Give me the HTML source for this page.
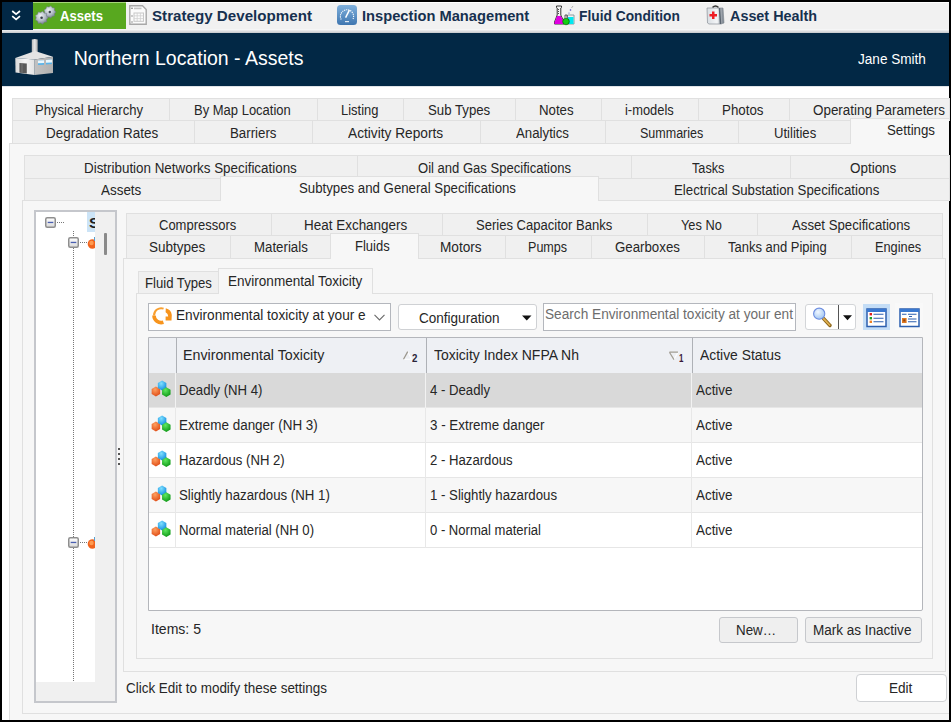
<!DOCTYPE html>
<html><head><meta charset="utf-8"><style>
html,body{margin:0;padding:0;}
body{width:951px;height:722px;position:relative;overflow:hidden;background:#000;font-family:"Liberation Sans",sans-serif;}
body>div{position:absolute;box-sizing:border-box;}
.t{white-space:pre;}
svg{position:absolute;overflow:visible;}
</style></head><body>
<div style="left:2px;top:2px;width:947px;height:718px;background:#ffffff;"></div>
<div style="left:2px;top:2px;width:947px;height:27px;background:#f1f1f1;border-top:1px solid #fff;"></div>
<div style="left:2px;top:2px;width:31px;height:27px;background:#022845;"></div>
<div style="left:33px;top:2px;width:93px;height:27px;background:#58a81f;border-top:1px solid #a6d67a;"></div>
<div style="left:2px;top:29px;width:947px;height:4px;background:linear-gradient(#fcfcfc,#c4c8cc);"></div>
<div style="left:2px;top:29px;width:31px;height:1px;background:#022845;"></div>
<div style="left:2px;top:33px;width:947px;height:53px;background:#022845;"></div>
<div style="left:2px;top:86px;width:947px;height:1px;background:#dfe3e7;"></div>
<div class="t" style="left:60px;top:8px;font-size:15.5px;line-height:15.5px;font-weight:700;color:#ffffff;transform:scaleX(0.8457);transform-origin:0 0;">Assets</div>
<div class="t" style="left:152px;top:8px;font-size:15.5px;line-height:15.5px;font-weight:700;color:#16304f;transform:scaleX(0.9776);transform-origin:0 0;">Strategy Development</div>
<div class="t" style="left:361.6px;top:8px;font-size:15.5px;line-height:15.5px;font-weight:700;color:#16304f;transform:scaleX(0.947);transform-origin:0 0;">Inspection Management</div>
<div class="t" style="left:579px;top:8px;font-size:15.5px;line-height:15.5px;font-weight:700;color:#16304f;transform:scaleX(0.8879);transform-origin:0 0;">Fluid Condition</div>
<div class="t" style="left:729.6px;top:8px;font-size:15.5px;line-height:15.5px;font-weight:700;color:#16304f;transform:scaleX(0.9275);transform-origin:0 0;">Asset Health</div>
<div class="t" style="left:73.7px;top:49px;font-size:19.5px;line-height:19.5px;font-weight:400;color:#ffffff;">Northern Location - Assets</div>
<div class="t" style="left:858.4px;top:52px;font-size:14px;line-height:14px;font-weight:400;color:#ffffff;transform:scaleX(0.9694);transform-origin:0 0;">Jane Smith</div>
<div style="left:9px;top:143px;width:940px;height:577px;background:#f7f7f7;border-left:1px solid #e0e0e0;border-top:1px solid #e0e0e0;"></div>
<div style="left:12px;top:98px;width:158px;height:23px;background:#f0f0f0;border:1px solid #e0e0e0;"></div>
<div style="left:169px;top:98px;width:149px;height:23px;background:#f0f0f0;border:1px solid #e0e0e0;"></div>
<div style="left:317px;top:98px;width:87px;height:23px;background:#f0f0f0;border:1px solid #e0e0e0;"></div>
<div style="left:403px;top:98px;width:113px;height:23px;background:#f0f0f0;border:1px solid #e0e0e0;"></div>
<div style="left:515px;top:98px;width:87px;height:23px;background:#f0f0f0;border:1px solid #e0e0e0;"></div>
<div style="left:601px;top:98px;width:98px;height:23px;background:#f0f0f0;border:1px solid #e0e0e0;"></div>
<div style="left:698px;top:98px;width:92px;height:23px;background:#f0f0f0;border:1px solid #e0e0e0;"></div>
<div style="left:789px;top:98px;width:161px;height:23px;background:#f0f0f0;border:1px solid #e0e0e0;"></div>
<div class="t" style="left:35px;top:104px;font-size:13.8px;line-height:13.8px;font-weight:400;color:#262626;transform:scaleX(0.9453);transform-origin:0 0;">Physical Hierarchy</div>
<div class="t" style="left:193.8px;top:104px;font-size:13.8px;line-height:13.8px;font-weight:400;color:#262626;transform:scaleX(0.9418);transform-origin:0 0;">By Map Location</div>
<div class="t" style="left:341px;top:104px;font-size:13.8px;line-height:13.8px;font-weight:400;color:#262626;transform:scaleX(0.9376);transform-origin:0 0;">Listing</div>
<div class="t" style="left:427.6px;top:104px;font-size:13.8px;line-height:13.8px;font-weight:400;color:#262626;transform:scaleX(0.9576);transform-origin:0 0;">Sub Types</div>
<div class="t" style="left:539px;top:104px;font-size:13.8px;line-height:13.8px;font-weight:400;color:#262626;transform:scaleX(0.9599);transform-origin:0 0;">Notes</div>
<div class="t" style="left:625.3px;top:104px;font-size:13.8px;line-height:13.8px;font-weight:400;color:#262626;transform:scaleX(0.934);transform-origin:0 0;">i-models</div>
<div class="t" style="left:722.4px;top:104px;font-size:13.8px;line-height:13.8px;font-weight:400;color:#262626;transform:scaleX(0.9658);transform-origin:0 0;">Photos</div>
<div class="t" style="left:813px;top:104px;font-size:13.8px;line-height:13.8px;font-weight:400;color:#262626;transform:scaleX(0.9725);transform-origin:0 0;">Operating Parameters</div>
<div style="left:12px;top:120px;width:183px;height:24px;background:#f0f0f0;border:1px solid #e0e0e0;"></div>
<div style="left:194px;top:120px;width:119px;height:24px;background:#f0f0f0;border:1px solid #e0e0e0;"></div>
<div style="left:312px;top:120px;width:169px;height:24px;background:#f0f0f0;border:1px solid #e0e0e0;"></div>
<div style="left:480px;top:120px;width:126px;height:24px;background:#f0f0f0;border:1px solid #e0e0e0;"></div>
<div style="left:605px;top:120px;width:134px;height:24px;background:#f0f0f0;border:1px solid #e0e0e0;"></div>
<div style="left:738px;top:120px;width:113px;height:24px;background:#f0f0f0;border:1px solid #e0e0e0;"></div>
<div class="t" style="left:46.4px;top:127px;font-size:13.8px;line-height:13.8px;font-weight:400;color:#262626;transform:scaleX(0.9744);transform-origin:0 0;">Degradation Rates</div>
<div class="t" style="left:229.7px;top:127px;font-size:13.8px;line-height:13.8px;font-weight:400;color:#262626;transform:scaleX(0.9628);transform-origin:0 0;">Barriers</div>
<div class="t" style="left:348px;top:127px;font-size:13.8px;line-height:13.8px;font-weight:400;color:#262626;transform:scaleX(0.9933);transform-origin:0 0;">Activity Reports</div>
<div class="t" style="left:515.5px;top:127px;font-size:13.8px;line-height:13.8px;font-weight:400;color:#262626;transform:scaleX(0.9598);transform-origin:0 0;">Analytics</div>
<div class="t" style="left:640.4px;top:127px;font-size:13.8px;line-height:13.8px;font-weight:400;color:#262626;transform:scaleX(0.9071);transform-origin:0 0;">Summaries</div>
<div class="t" style="left:773.9px;top:127px;font-size:13.8px;line-height:13.8px;font-weight:400;color:#262626;transform:scaleX(0.949);transform-origin:0 0;">Utilities</div>
<div style="left:850px;top:118px;width:99px;height:26px;background:#f7f7f7;border:1px solid #e0e0e0;border-bottom:none;border-right:none;"></div>
<div class="t" style="left:886.9px;top:124px;font-size:13.8px;line-height:13.8px;font-weight:400;color:#262626;transform:scaleX(0.9627);transform-origin:0 0;">Settings</div>
<div style="left:22px;top:200px;width:927px;height:514px;background:#f7f7f7;border:1px solid #e0e0e0;border-right:none;"></div>
<div style="left:24px;top:155px;width:334px;height:24px;background:#f0f0f0;border:1px solid #e0e0e0;"></div>
<div style="left:357px;top:155px;width:275px;height:24px;background:#f0f0f0;border:1px solid #e0e0e0;"></div>
<div style="left:631px;top:155px;width:160px;height:24px;background:#f0f0f0;border:1px solid #e0e0e0;"></div>
<div style="left:790px;top:155px;width:160px;height:24px;background:#f0f0f0;border:1px solid #e0e0e0;"></div>
<div class="t" style="left:83.5px;top:162px;font-size:13.8px;line-height:13.8px;font-weight:400;color:#262626;transform:scaleX(0.9703);transform-origin:0 0;">Distribution Networks Specifications</div>
<div class="t" style="left:417.5px;top:162px;font-size:13.8px;line-height:13.8px;font-weight:400;color:#262626;transform:scaleX(0.9455);transform-origin:0 0;">Oil and Gas Specifications</div>
<div class="t" style="left:692px;top:162px;font-size:13.8px;line-height:13.8px;font-weight:400;color:#262626;transform:scaleX(0.9183);transform-origin:0 0;">Tasks</div>
<div class="t" style="left:850.4px;top:162px;font-size:13.8px;line-height:13.8px;font-weight:400;color:#262626;transform:scaleX(0.9735);transform-origin:0 0;">Options</div>
<div style="left:24px;top:178px;width:197px;height:23px;background:#f0f0f0;border:1px solid #e0e0e0;"></div>
<div class="t" style="left:101px;top:184px;font-size:13.8px;line-height:13.8px;font-weight:400;color:#262626;transform:scaleX(0.9733);transform-origin:0 0;">Assets</div>
<div style="left:598px;top:178px;width:352px;height:23px;background:#f0f0f0;border:1px solid #e0e0e0;"></div>
<div class="t" style="left:674px;top:184px;font-size:13.8px;line-height:13.8px;font-weight:400;color:#262626;transform:scaleX(0.9595);transform-origin:0 0;">Electrical Substation Specifications</div>
<div style="left:220px;top:176px;width:379px;height:25px;background:#f7f7f7;border:1px solid #e0e0e0;border-bottom:none;"></div>
<div class="t" style="left:299px;top:182px;font-size:13.8px;line-height:13.8px;font-weight:400;color:#262626;transform:scaleX(0.959);transform-origin:0 0;">Subtypes and General Specifications</div>
<div style="left:34px;top:210px;width:83px;height:493px;background:#f0f0f0;border:2px solid #c5c7cc;"></div>
<div style="left:36px;top:212px;width:59px;height:470px;background:#ffffff;"></div>
<div style="left:104px;top:233px;width:3px;height:22px;background:#8a8a8a;border-radius:1px;"></div>
<div style="left:118px;top:448px;width:2px;height:2px;background:#555;"></div>
<div style="left:118px;top:453px;width:2px;height:2px;background:#555;"></div>
<div style="left:118px;top:458px;width:2px;height:2px;background:#555;"></div>
<div style="left:118px;top:463px;width:2px;height:2px;background:#555;"></div>
<div style="left:123px;top:258px;width:823px;height:414px;background:#f7f7f7;border:1px solid #e0e0e0;"></div>
<div style="left:126px;top:213px;width:146px;height:23px;background:#f0f0f0;border:1px solid #e0e0e0;"></div>
<div style="left:271px;top:213px;width:172px;height:23px;background:#f0f0f0;border:1px solid #e0e0e0;"></div>
<div style="left:442px;top:213px;width:206px;height:23px;background:#f0f0f0;border:1px solid #e0e0e0;"></div>
<div style="left:647px;top:213px;width:111px;height:23px;background:#f0f0f0;border:1px solid #e0e0e0;"></div>
<div style="left:757px;top:213px;width:186px;height:23px;background:#f0f0f0;border:1px solid #e0e0e0;"></div>
<div class="t" style="left:158.7px;top:219px;font-size:13.8px;line-height:13.8px;font-weight:400;color:#262626;transform:scaleX(0.9421);transform-origin:0 0;">Compressors</div>
<div class="t" style="left:304.4px;top:219px;font-size:13.8px;line-height:13.8px;font-weight:400;color:#262626;transform:scaleX(0.976);transform-origin:0 0;">Heat Exchangers</div>
<div class="t" style="left:476.2px;top:219px;font-size:13.8px;line-height:13.8px;font-weight:400;color:#262626;transform:scaleX(0.9454);transform-origin:0 0;">Series Capacitor Banks</div>
<div class="t" style="left:681.4px;top:219px;font-size:13.8px;line-height:13.8px;font-weight:400;color:#262626;transform:scaleX(0.9276);transform-origin:0 0;">Yes No</div>
<div class="t" style="left:792px;top:219px;font-size:13.8px;line-height:13.8px;font-weight:400;color:#262626;transform:scaleX(0.9565);transform-origin:0 0;">Asset Specifications</div>
<div style="left:126px;top:235px;width:105px;height:24px;background:#f0f0f0;border:1px solid #e0e0e0;"></div>
<div style="left:230px;top:235px;width:101px;height:24px;background:#f0f0f0;border:1px solid #e0e0e0;"></div>
<div class="t" style="left:148.6px;top:241px;font-size:13.8px;line-height:13.8px;font-weight:400;color:#262626;transform:scaleX(0.9769);transform-origin:0 0;">Subtypes</div>
<div class="t" style="left:253.6px;top:241px;font-size:13.8px;line-height:13.8px;font-weight:400;color:#262626;transform:scaleX(0.961);transform-origin:0 0;">Materials</div>
<div style="left:418px;top:235px;width:88px;height:24px;background:#f0f0f0;border:1px solid #e0e0e0;"></div>
<div style="left:505px;top:235px;width:87px;height:24px;background:#f0f0f0;border:1px solid #e0e0e0;"></div>
<div style="left:591px;top:235px;width:114px;height:24px;background:#f0f0f0;border:1px solid #e0e0e0;"></div>
<div style="left:704px;top:235px;width:148px;height:24px;background:#f0f0f0;border:1px solid #e0e0e0;"></div>
<div style="left:851px;top:235px;width:92px;height:24px;background:#f0f0f0;border:1px solid #e0e0e0;"></div>
<div class="t" style="left:439.5px;top:241px;font-size:13.8px;line-height:13.8px;font-weight:400;color:#262626;transform:scaleX(0.9888);transform-origin:0 0;">Motors</div>
<div class="t" style="left:528.3px;top:241px;font-size:13.8px;line-height:13.8px;font-weight:400;color:#262626;transform:scaleX(0.9103);transform-origin:0 0;">Pumps</div>
<div class="t" style="left:615.2px;top:241px;font-size:13.8px;line-height:13.8px;font-weight:400;color:#262626;transform:scaleX(0.9615);transform-origin:0 0;">Gearboxes</div>
<div class="t" style="left:728.4px;top:241px;font-size:13.8px;line-height:13.8px;font-weight:400;color:#262626;transform:scaleX(0.9401);transform-origin:0 0;">Tanks and Piping</div>
<div class="t" style="left:875.2px;top:241px;font-size:13.8px;line-height:13.8px;font-weight:400;color:#262626;transform:scaleX(0.9246);transform-origin:0 0;">Engines</div>
<div style="left:330px;top:233px;width:89px;height:26px;background:#f7f7f7;border:1px solid #e0e0e0;border-bottom:none;"></div>
<div class="t" style="left:354.5px;top:240px;font-size:13.8px;line-height:13.8px;font-weight:400;color:#262626;transform:scaleX(0.9426);transform-origin:0 0;">Fluids</div>
<div style="left:136px;top:293px;width:797px;height:366px;background:#f7f7f7;border:1px solid #e0e0e0;"></div>
<div style="left:138px;top:271px;width:81px;height:23px;background:#f0f0f0;border:1px solid #e0e0e0;"></div>
<div class="t" style="left:145.2px;top:277px;font-size:13.8px;line-height:13.8px;font-weight:400;color:#262626;transform:scaleX(0.9515);transform-origin:0 0;">Fluid Types</div>
<div style="left:218px;top:268px;width:155px;height:26px;background:#f7f7f7;border:1px solid #e0e0e0;border-bottom:none;"></div>
<div class="t" style="left:227.9px;top:275px;font-size:13.8px;line-height:13.8px;font-weight:400;color:#262626;transform:scaleX(0.9809);transform-origin:0 0;">Environmental Toxicity</div>
<div style="left:148px;top:303px;width:243px;height:28px;background:#ffffff;border:1px solid #b4b7bd;"></div>
<div class="t" style="left:176.3px;top:309px;font-size:13.8px;line-height:13.8px;font-weight:400;color:#262626;transform:scaleX(0.9895);transform-origin:0 0;">Environmental toxicity at your e</div>
<div style="left:398px;top:304px;width:139px;height:26px;background:#ffffff;border:1px solid #cfd1d4;border-radius:3px;"></div>
<div class="t" style="left:419px;top:312px;font-size:13.8px;line-height:13.8px;font-weight:400;color:#262626;transform:scaleX(0.9808);transform-origin:0 0;">Configuration</div>
<div style="left:543px;top:303px;width:253px;height:28px;background:#ffffff;border:1px solid #b4b7bd;"></div>
<div class="t" style="left:545.2px;top:308px;font-size:13.8px;line-height:13.8px;font-weight:400;color:#6d6d6d;transform:scaleX(0.989);transform-origin:0 0;">Search Environmental toxicity at your ent</div>
<div style="left:805px;top:304px;width:51px;height:26px;background:#ffffff;border:1px solid #d3d5d8;border-radius:3px;"></div>
<div style="left:838px;top:305px;width:1px;height:24px;background:#555;"></div>
<div style="left:863px;top:304px;width:27px;height:26px;background:#c4ddf6;"></div>
<div style="left:895px;top:303px;width:28px;height:27px;background:#f9f9f9;"></div>
<div style="left:148px;top:337px;width:775px;height:274px;background:#ffffff;border:1px solid #b4b6bb;border-radius:0 0 2px 0;"></div>
<div style="left:149px;top:338px;width:773px;height:35px;background:#eef0f4;"></div>
<div style="left:176px;top:338px;width:1px;height:35px;background:#aeb1b6;"></div>
<div style="left:426px;top:338px;width:1px;height:35px;background:#aeb1b6;"></div>
<div style="left:692px;top:338px;width:1px;height:35px;background:#aeb1b6;"></div>
<div style="left:149px;top:373px;width:773px;height:35px;background:#d9d9d9;border-bottom:1px solid #e6e6e6;"></div>
<div style="left:175px;top:373px;width:1px;height:35px;background:#f2f2f2;"></div>
<div style="left:425px;top:373px;width:1px;height:35px;background:#f2f2f2;"></div>
<div style="left:691px;top:373px;width:1px;height:35px;background:#f2f2f2;"></div>
<div class="t" style="left:178.5px;top:384px;font-size:13.8px;line-height:13.8px;font-weight:400;color:#262626;transform:scaleX(0.9553);transform-origin:0 0;">Deadly (NH 4)</div>
<div class="t" style="left:430px;top:384px;font-size:13.8px;line-height:13.8px;font-weight:400;color:#262626;transform:scaleX(0.954);transform-origin:0 0;">4 - Deadly</div>
<div class="t" style="left:695.7px;top:384px;font-size:13.8px;line-height:13.8px;font-weight:400;color:#262626;transform:scaleX(0.9713);transform-origin:0 0;">Active</div>
<div style="left:149px;top:408px;width:773px;height:35px;background:#f7f7f7;border-bottom:1px solid #e6e6e6;"></div>
<div style="left:175px;top:408px;width:1px;height:35px;background:#e8e8e8;"></div>
<div style="left:425px;top:408px;width:1px;height:35px;background:#e8e8e8;"></div>
<div style="left:691px;top:408px;width:1px;height:35px;background:#e8e8e8;"></div>
<div class="t" style="left:178.5px;top:419px;font-size:13.8px;line-height:13.8px;font-weight:400;color:#262626;transform:scaleX(0.9732);transform-origin:0 0;">Extreme danger (NH 3)</div>
<div class="t" style="left:430px;top:419px;font-size:13.8px;line-height:13.8px;font-weight:400;color:#262626;transform:scaleX(0.9694);transform-origin:0 0;">3 - Extreme danger</div>
<div class="t" style="left:695.7px;top:419px;font-size:13.8px;line-height:13.8px;font-weight:400;color:#262626;transform:scaleX(0.9713);transform-origin:0 0;">Active</div>
<div style="left:149px;top:443px;width:773px;height:35px;background:#ffffff;border-bottom:1px solid #e6e6e6;"></div>
<div style="left:175px;top:443px;width:1px;height:35px;background:#e8e8e8;"></div>
<div style="left:425px;top:443px;width:1px;height:35px;background:#e8e8e8;"></div>
<div style="left:691px;top:443px;width:1px;height:35px;background:#e8e8e8;"></div>
<div class="t" style="left:178.5px;top:454px;font-size:13.8px;line-height:13.8px;font-weight:400;color:#262626;transform:scaleX(0.9506);transform-origin:0 0;">Hazardous (NH 2)</div>
<div class="t" style="left:430px;top:454px;font-size:13.8px;line-height:13.8px;font-weight:400;color:#262626;transform:scaleX(0.9532);transform-origin:0 0;">2 - Hazardous</div>
<div class="t" style="left:695.7px;top:454px;font-size:13.8px;line-height:13.8px;font-weight:400;color:#262626;transform:scaleX(0.9713);transform-origin:0 0;">Active</div>
<div style="left:149px;top:478px;width:773px;height:35px;background:#f7f7f7;border-bottom:1px solid #e6e6e6;"></div>
<div style="left:175px;top:478px;width:1px;height:35px;background:#e8e8e8;"></div>
<div style="left:425px;top:478px;width:1px;height:35px;background:#e8e8e8;"></div>
<div style="left:691px;top:478px;width:1px;height:35px;background:#e8e8e8;"></div>
<div class="t" style="left:178.5px;top:489px;font-size:13.8px;line-height:13.8px;font-weight:400;color:#262626;transform:scaleX(0.9593);transform-origin:0 0;">Slightly hazardous (NH 1)</div>
<div class="t" style="left:430px;top:489px;font-size:13.8px;line-height:13.8px;font-weight:400;color:#262626;transform:scaleX(0.9571);transform-origin:0 0;">1 - Slightly hazardous</div>
<div class="t" style="left:695.7px;top:489px;font-size:13.8px;line-height:13.8px;font-weight:400;color:#262626;transform:scaleX(0.9713);transform-origin:0 0;">Active</div>
<div style="left:149px;top:513px;width:773px;height:35px;background:#ffffff;border-bottom:1px solid #e6e6e6;"></div>
<div style="left:175px;top:513px;width:1px;height:35px;background:#e8e8e8;"></div>
<div style="left:425px;top:513px;width:1px;height:35px;background:#e8e8e8;"></div>
<div style="left:691px;top:513px;width:1px;height:35px;background:#e8e8e8;"></div>
<div class="t" style="left:178.5px;top:524px;font-size:13.8px;line-height:13.8px;font-weight:400;color:#262626;transform:scaleX(0.9519);transform-origin:0 0;">Normal material (NH 0)</div>
<div class="t" style="left:430px;top:524px;font-size:13.8px;line-height:13.8px;font-weight:400;color:#262626;transform:scaleX(0.9462);transform-origin:0 0;">0 - Normal material</div>
<div class="t" style="left:695.7px;top:524px;font-size:13.8px;line-height:13.8px;font-weight:400;color:#262626;transform:scaleX(0.9713);transform-origin:0 0;">Active</div>
<div class="t" style="left:183.2px;top:349px;font-size:13.8px;line-height:13.8px;font-weight:400;color:#262626;transform:scaleX(1.0313);transform-origin:0 0;">Environmental Toxicity</div>
<div class="t" style="left:434px;top:349px;font-size:13.8px;line-height:13.8px;font-weight:400;color:#262626;transform:scaleX(1.013);transform-origin:0 0;">Toxicity Index NFPA Nh</div>
<div class="t" style="left:700px;top:349px;font-size:13.8px;line-height:13.8px;font-weight:400;color:#262626;transform:scaleX(1.0058);transform-origin:0 0;">Active Status</div>
<div class="t" style="left:151px;top:623px;font-size:13.8px;line-height:13.8px;font-weight:400;color:#262626;transform:scaleX(1.0188);transform-origin:0 0;">Items: 5</div>
<div style="left:719px;top:617px;width:79px;height:26px;background:#efefef;border:1px solid #c6c8cc;border-radius:3px;"></div>
<div class="t" style="left:736.4px;top:624px;font-size:13.8px;line-height:13.8px;font-weight:400;color:#262626;transform:scaleX(0.9685);transform-origin:0 0;">New…</div>
<div style="left:805px;top:617px;width:117px;height:26px;background:#efefef;border:1px solid #c6c8cc;border-radius:3px;"></div>
<div class="t" style="left:812.7px;top:624px;font-size:13.8px;line-height:13.8px;font-weight:400;color:#262626;transform:scaleX(0.9796);transform-origin:0 0;">Mark as Inactive</div>
<div class="t" style="left:126.4px;top:682px;font-size:13.8px;line-height:13.8px;font-weight:400;color:#262626;transform:scaleX(0.9744);transform-origin:0 0;">Click Edit to modify these settings</div>
<div style="left:856px;top:674px;width:91px;height:28px;background:#ffffff;border:1px solid #cfd1d4;border-radius:4px;"></div>
<div class="t" style="left:888.6px;top:682px;font-size:13.8px;line-height:13.8px;font-weight:400;color:#262626;transform:scaleX(0.984);transform-origin:0 0;">Edit</div>
<svg style="left:2px;top:2px;" width="31" height="27" viewBox="0 0 31 27"><path d="M10.2 9 L14.1 12.2 L18 9 M10.2 14.2 L14.1 17.4 L18 14.2" fill="none" stroke="#ffffff" stroke-width="1.7"/></svg>
<svg style="left:33px;top:2px;" width="30" height="27" viewBox="0 0 30 27"><defs><radialGradient id="gg" cx="40%" cy="35%" r="70%"><stop offset="0" stop-color="#eef1f4"/><stop offset="0.55" stop-color="#b4bdc7"/><stop offset="1" stop-color="#6d7682"/></radialGradient></defs>
<polygon points="23.00,10.00 21.46,11.70 21.55,13.99 19.28,14.30 17.88,16.11 15.94,14.88 13.70,15.37 13.00,13.19 10.97,12.12 11.84,10.00 10.97,7.88 13.00,6.81 13.70,4.63 15.94,5.12 17.88,3.89 19.28,5.70 21.55,6.01 21.46,8.30" fill="url(#gg)" stroke="#6f7884" stroke-width="0.5"/>
<circle cx="16.8" cy="10" r="1.2" fill="#3a424c"/>
<polygon points="15.20,15.70 13.56,17.51 13.66,19.94 11.24,20.27 9.75,22.20 7.68,20.90 5.30,21.42 4.56,19.09 2.40,17.96 3.32,15.70 2.40,13.44 4.56,12.31 5.30,9.98 7.68,10.50 9.75,9.20 11.24,11.13 13.66,11.46 13.56,13.89" fill="url(#gg)" stroke="#6f7884" stroke-width="0.5"/>
<circle cx="8.6" cy="15.7" r="1.3" fill="#3a424c"/></svg>
<svg style="left:129px;top:5px;" width="18" height="20" viewBox="0 0 18 20"><path d="M0.8 0.8 H13.5 L17.2 4.5 V19.2 H0.8 Z" fill="#fbfbfb" stroke="#a8a8a8" stroke-width="1.4"/>
<rect x="5" y="2.6" width="7.5" height="1.6" fill="#c4c4c4"/>
<rect x="5" y="8" width="9.5" height="8.3" fill="none" stroke="#c8c8c8" stroke-width="1"/>
<path d="M5 10.8 H14.5 M5 13.6 H14.5 M8.2 8 V16.3 M11.4 8 V16.3" stroke="#d0d0d0" stroke-width="0.8"/>
<circle cx="3" cy="3.3" r="0.7" fill="#555"/><circle cx="3" cy="11" r="0.7" fill="#777"/><circle cx="3" cy="17" r="0.7" fill="#777"/></svg>
<svg style="left:337px;top:5px;" width="20" height="20" viewBox="0 0 20 20"><defs><linearGradient id="gb" x1="0" y1="0" x2="0" y2="1"><stop offset="0" stop-color="#7fb0dc"/><stop offset="1" stop-color="#3f76b0"/></linearGradient></defs>
<rect x="0" y="0" width="20" height="20" rx="3.5" fill="url(#gb)"/>
<path d="M4.2 14.5 A6.6 6.6 0 1 1 15.8 14.5" fill="none" stroke="#ffffff" stroke-width="1.1" stroke-dasharray="1.2 0.9"/>
<path d="M8.6 12.6 L12.4 5.2" stroke="#ffffff" stroke-width="1.5"/>
<rect x="8" y="16" width="4" height="1.2" fill="#dfe9f3"/></svg>
<svg style="left:554px;top:5px;" width="21" height="20" viewBox="0 0 21 20"><path d="M2.5 1 H7.5 V2.5 L6.8 3 V10 L10 17 V19 H0.5 V17 L3.2 10 V3 L2.5 2.5 Z" fill="#f2f2f2" stroke="#222" stroke-width="0.9"/>
<path d="M3 11 H7 L10 17.5 V19 H0.5 V17.5 Z" fill="#e000e0"/>
<path d="M4 4.5 H5 M4 6.5 H5 M4 8.5 H5" stroke="#222" stroke-width="0.8"/>
<path d="M13.5 10 H20 V19 H13.5 Z" fill="#f0f0f0" stroke="#7a8a90" stroke-width="0.8"/>
<rect x="14" y="12" width="5.5" height="7" fill="#00e8f0"/>
<circle cx="12" cy="16.5" r="3.3" fill="#10d010" stroke="#0a5a0a" stroke-width="0.7"/>
<path d="M11 13 V10 H13 V13" fill="#f0f0f0" stroke="#222" stroke-width="0.7"/>
<circle cx="16.5" cy="5" r="0.8" fill="#4a4ac0"/><circle cx="15" cy="8" r="0.6" fill="#4a4ac0"/><path d="M17.5 3 L19 1" stroke="#888" stroke-width="0.6"/></svg>
<svg style="left:706px;top:5px;" width="19" height="20" viewBox="0 0 19 20"><defs><linearGradient id="fa" x1="0" y1="0" x2="1" y2="0"><stop offset="0" stop-color="#d8dde2"/><stop offset="0.6" stop-color="#f4f6f8"/><stop offset="1" stop-color="#6a7480"/></linearGradient></defs>
<path d="M6.5 2.5 Q9.5 -0.5 12.5 2.5" fill="none" stroke="#333" stroke-width="1.6"/>
<path d="M1 3 H17 L18 18 L15 19 H3 L1.5 18 Z" fill="url(#fa)" stroke="#8a9098" stroke-width="0.7"/>
<path d="M13.5 3 L14.5 19" stroke="#5a6470" stroke-width="1.5"/>
<path d="M6 6.5 H8.5 V9 H11 V11.5 H8.5 V14 H6 V11.5 H3.5 V9 H6 Z" fill="#ee1c24"/></svg>
<svg style="left:14px;top:38px;" width="41" height="39" viewBox="0 0 41 39"><defs>
<linearGradient id="fl" x1="0" y1="0" x2="1" y2="0"><stop offset="0" stop-color="#d9d9d9"/><stop offset="0.5" stop-color="#f5f5f5"/><stop offset="1" stop-color="#e2e2e2"/></linearGradient>
<linearGradient id="fr" x1="0" y1="0" x2="1" y2="0"><stop offset="0" stop-color="#c2c2c2"/><stop offset="1" stop-color="#b0b0b0"/></linearGradient>
<linearGradient id="fc" x1="0" y1="0" x2="1" y2="0"><stop offset="0" stop-color="#bdbdbd"/><stop offset="0.5" stop-color="#e8e8e8"/><stop offset="1" stop-color="#a8a8a8"/></linearGradient></defs>
<path d="M17.8 1.5 Q20.8 0.5 23.7 1.5 V14 H17.8 Z" fill="url(#fc)"/>
<path d="M1.3 20 L21 13 L39 18.8 L20.6 21.6 Z" fill="#e4e4e4"/>
<path d="M1.3 20 L20.6 21.6 V37 L1.5 34.4 Z" fill="url(#fl)"/>
<path d="M20.6 21.6 L39 18.8 V35 L20.6 37 Z" fill="url(#fr)"/>
<path d="M5.4 25 L12.8 25.5 V35.5 L5.4 34.8 Z" fill="#5a5a5a"/>
<path d="M8 25.2 V35" stroke="#8a8a8a" stroke-width="0.6"/>
<path d="M24 22.6 L30 22.2 V26.8 L24 27.1 Z" fill="#58b4ea"/><path d="M24 22.6 L30 22.2 V25 L24 25.3 Z" fill="#eaf6fc"/>
<path d="M32 22 L38 21.5 V26 L32 26.4 Z" fill="#58b4ea"/><path d="M32 22 L38 21.5 V24.4 L32 24.7 Z" fill="#eaf6fc"/></svg>
<svg style="left:44.5px;top:216.5px;" width="11" height="11" viewBox="0 0 11 11"><defs><linearGradient id="mb" x1="0" y1="0" x2="0" y2="1"><stop offset="0" stop-color="#ffffff"/><stop offset="1" stop-color="#d8d8d8"/></linearGradient></defs>
<rect x="0.75" y="0.75" width="9.5" height="9.5" rx="1.5" fill="url(#mb)" stroke="#8e8e8e" stroke-width="1.5"/>
<rect x="2.7" y="4.8" width="5.6" height="1.3" fill="#4a5fb0"/></svg>
<svg style="left:68px;top:237px;" width="11" height="11" viewBox="0 0 11 11"><defs><linearGradient id="mb" x1="0" y1="0" x2="0" y2="1"><stop offset="0" stop-color="#ffffff"/><stop offset="1" stop-color="#d8d8d8"/></linearGradient></defs>
<rect x="0.75" y="0.75" width="9.5" height="9.5" rx="1.5" fill="url(#mb)" stroke="#8e8e8e" stroke-width="1.5"/>
<rect x="2.7" y="4.8" width="5.6" height="1.3" fill="#4a5fb0"/></svg>
<svg style="left:68px;top:537px;" width="11" height="11" viewBox="0 0 11 11"><defs><linearGradient id="mb" x1="0" y1="0" x2="0" y2="1"><stop offset="0" stop-color="#ffffff"/><stop offset="1" stop-color="#d8d8d8"/></linearGradient></defs>
<rect x="0.75" y="0.75" width="9.5" height="9.5" rx="1.5" fill="url(#mb)" stroke="#8e8e8e" stroke-width="1.5"/>
<rect x="2.7" y="4.8" width="5.6" height="1.3" fill="#4a5fb0"/></svg>
<div style="left:57px;top:222px;width:7px;height:1px;background:repeating-linear-gradient(90deg,#777 0 1px,transparent 1px 2px);"></div>
<div style="left:80px;top:242px;width:7px;height:1px;background:repeating-linear-gradient(90deg,#777 0 1px,transparent 1px 2px);"></div>
<div style="left:80px;top:542px;width:7px;height:1px;background:repeating-linear-gradient(90deg,#777 0 1px,transparent 1px 2px);"></div>
<div style="left:73px;top:231px;width:1px;height:6px;background:repeating-linear-gradient(180deg,#777 0 1px,transparent 1px 2px);"></div>
<div style="left:73px;top:248px;width:1px;height:289px;background:repeating-linear-gradient(180deg,#777 0 1px,transparent 1px 2px);"></div>
<div style="left:73px;top:548px;width:1px;height:134px;background:repeating-linear-gradient(180deg,#777 0 1px,transparent 1px 2px);"></div>
<div style="left:87px;top:212px;width:7.5px;height:19.5px;background:#cce4f7;"></div>
<div style="left:88px;top:212px;width:6.5px;height:19px;overflow:hidden;"><div class="t" style="position:absolute;left:1px;top:3px;font-size:15.5px;line-height:15.5px;font-weight:700;color:#1e1e1e;">S</div></div>
<div style="left:86px;top:237px;width:8.5px;height:14px;overflow:hidden;"><svg style="left:0;top:0" width="14" height="14"><circle cx="6.5" cy="7" r="4.8" fill="#f0641e"/><circle cx="5.5" cy="6" r="2.2" fill="#ff9a50"/><rect x="8" y="0" width="1" height="4" fill="#5aa0d0"/></svg></div>
<div style="left:86px;top:537px;width:8.5px;height:14px;overflow:hidden;"><svg style="left:0;top:0" width="14" height="14"><circle cx="6.5" cy="7" r="4.8" fill="#f0641e"/><circle cx="5.5" cy="6" r="2.2" fill="#ff9a50"/><rect x="8" y="0" width="1" height="4" fill="#5aa0d0"/></svg></div>
<svg style="left:150px;top:304px;" width="26" height="24" viewBox="0 0 26 24"><path d="M13.6 4.6 A7.2 7.2 0 0 0 4 11.5" fill="none" stroke="#f9a030" stroke-width="2"/>
<path d="M4 11.5 A7.2 7.2 0 0 0 13.4 18.3" fill="none" stroke="#f7941d" stroke-width="3.6"/>
<path d="M15.8 4.3 A7.8 7.8 0 0 1 21.8 11 L21.5 16.6 L15.6 16.6 L15.6 12.6 L18.2 12.4 A4.6 4.6 0 0 0 15.6 8.2 Z" fill="#f7941d"/></svg>
<svg style="left:374px;top:314px;" width="11" height="7" viewBox="0 0 11 7"><path d="M0.5 0.8 L5.5 6 L10.5 0.8" fill="none" stroke="#6a6a6a" stroke-width="1.1"/></svg>
<svg style="left:522px;top:315px;" width="10" height="6" viewBox="0 0 10 6"><path d="M0 0.5 H9.5 L4.75 5.5 Z" fill="#111"/></svg>
<svg style="left:811px;top:306px;" width="24" height="23" viewBox="0 0 24 23"><defs><radialGradient id="mg" cx="40%" cy="35%" r="70%"><stop offset="0" stop-color="#f2f8ff"/><stop offset="1" stop-color="#9cc4f2"/></radialGradient></defs>
<path d="M12.5 12.5 L19 19.5" stroke="#8a6418" stroke-width="3.4" stroke-linecap="round"/>
<path d="M12.8 12.8 L18.6 19" stroke="#e0b050" stroke-width="1.8" stroke-linecap="round"/>
<circle cx="8.2" cy="7.7" r="5.6" fill="url(#mg)" stroke="#6d8de0" stroke-width="1.1"/></svg>
<svg style="left:843px;top:315px;" width="10" height="6" viewBox="0 0 10 6"><path d="M0 0.3 H9 L4.5 5.3 Z" fill="#111"/></svg>
<svg style="left:866px;top:308px;" width="21" height="19" viewBox="0 0 21 19"><rect x="1" y="1" width="19" height="17.5" fill="#ffffff" stroke="#2d5fae" stroke-width="1.5"/>
<rect x="1" y="1" width="19" height="3" fill="#3a78d0"/>
<rect x="3.6" y="5" width="2.4" height="2.4" fill="#e02020"/><rect x="3.6" y="9" width="2.4" height="2.4" fill="#20a020"/><rect x="3.6" y="12.6" width="2.4" height="2.4" fill="#f08020"/>
<path d="M7.5 6.2 H17.5 M7.5 10.2 H17.5 M7.5 13.8 H17.5" stroke="#2d5fae" stroke-width="1.1"/></svg>
<svg style="left:899px;top:308px;" width="21" height="19" viewBox="0 0 21 19"><rect x="1" y="1" width="19" height="17.5" fill="#ffffff" stroke="#2d5fae" stroke-width="1.5"/>
<rect x="1" y="1" width="19" height="3" fill="#3a78d0"/>
<rect x="3" y="10" width="4.6" height="5" fill="#e07820"/><rect x="4.3" y="11.4" width="2" height="2" fill="#8a4010"/>
<path d="M3 6.2 H7.5 M9 6.2 H17.5 M10 8.5 H13 M9 11 H17.5 M9 13.8 H17.5" stroke="#2d5fae" stroke-width="1.1"/></svg>
<svg style="left:0;top:0;width:0;height:0"><defs>
<radialGradient id="bo" cx="40%" cy="30%" r="70%"><stop offset="0" stop-color="#ffa060"/><stop offset="1" stop-color="#e0501a"/></radialGradient>
<radialGradient id="bb" cx="40%" cy="30%" r="70%"><stop offset="0" stop-color="#7fe0ff"/><stop offset="1" stop-color="#1590e0"/></radialGradient>
<radialGradient id="bg2" cx="40%" cy="30%" r="70%"><stop offset="0" stop-color="#60e860"/><stop offset="1" stop-color="#109a18"/></radialGradient></defs></svg>
<svg style="left:149.5px;top:380.5px;" width="22" height="16" viewBox="0 0 22 16"><polygon points="10.14,12.95 5.90,15.40 1.66,12.95 1.66,8.05 5.90,5.60 10.14,8.05" fill="url(#bo)"/>
<polygon points="16.34,6.95 12.10,9.40 7.86,6.95 7.86,2.05 12.10,-0.40 16.34,2.05" fill="url(#bb)"/>
<polygon points="20.54,13.55 16.30,16.00 12.06,13.55 12.06,8.65 16.30,6.20 20.54,8.65" fill="url(#bg2)"/></svg>
<svg style="left:149.5px;top:415.5px;" width="22" height="16" viewBox="0 0 22 16"><polygon points="10.14,12.95 5.90,15.40 1.66,12.95 1.66,8.05 5.90,5.60 10.14,8.05" fill="url(#bo)"/>
<polygon points="16.34,6.95 12.10,9.40 7.86,6.95 7.86,2.05 12.10,-0.40 16.34,2.05" fill="url(#bb)"/>
<polygon points="20.54,13.55 16.30,16.00 12.06,13.55 12.06,8.65 16.30,6.20 20.54,8.65" fill="url(#bg2)"/></svg>
<svg style="left:149.5px;top:450.5px;" width="22" height="16" viewBox="0 0 22 16"><polygon points="10.14,12.95 5.90,15.40 1.66,12.95 1.66,8.05 5.90,5.60 10.14,8.05" fill="url(#bo)"/>
<polygon points="16.34,6.95 12.10,9.40 7.86,6.95 7.86,2.05 12.10,-0.40 16.34,2.05" fill="url(#bb)"/>
<polygon points="20.54,13.55 16.30,16.00 12.06,13.55 12.06,8.65 16.30,6.20 20.54,8.65" fill="url(#bg2)"/></svg>
<svg style="left:149.5px;top:485.5px;" width="22" height="16" viewBox="0 0 22 16"><polygon points="10.14,12.95 5.90,15.40 1.66,12.95 1.66,8.05 5.90,5.60 10.14,8.05" fill="url(#bo)"/>
<polygon points="16.34,6.95 12.10,9.40 7.86,6.95 7.86,2.05 12.10,-0.40 16.34,2.05" fill="url(#bb)"/>
<polygon points="20.54,13.55 16.30,16.00 12.06,13.55 12.06,8.65 16.30,6.20 20.54,8.65" fill="url(#bg2)"/></svg>
<svg style="left:149.5px;top:520.5px;" width="22" height="16" viewBox="0 0 22 16"><polygon points="10.14,12.95 5.90,15.40 1.66,12.95 1.66,8.05 5.90,5.60 10.14,8.05" fill="url(#bo)"/>
<polygon points="16.34,6.95 12.10,9.40 7.86,6.95 7.86,2.05 12.10,-0.40 16.34,2.05" fill="url(#bb)"/>
<polygon points="20.54,13.55 16.30,16.00 12.06,13.55 12.06,8.65 16.30,6.20 20.54,8.65" fill="url(#bg2)"/></svg>
<svg style="left:400px;top:348px;" width="16" height="14" viewBox="0 0 16 14"><path d="M3.5 11.2 L11.5 11.2 L7.7 3.6" fill="none" stroke="#ffffff" stroke-width="1.1"/><path d="M3.5 11.2 L7.7 3.6" fill="none" stroke="#9a968c" stroke-width="1.2"/></svg>
<div class="t" style="left:411.6px;top:353px;font-size:11px;line-height:11px;font-weight:700;color:#2a2438;transform:scaleX(0.8816);transform-origin:0 0;">2</div>
<svg style="left:666px;top:348px;" width="16" height="14" viewBox="0 0 16 14"><path d="M8 11.6 L12 4.2" fill="none" stroke="#ffffff" stroke-width="1.1"/><path d="M3.4 4.2 H12 M3.4 4.2 L8 11.6" fill="none" stroke="#a29e94" stroke-width="1.2"/></svg>
<div class="t" style="left:678.6px;top:353px;font-size:11px;line-height:11px;font-weight:700;color:#3a1838;transform:scaleX(0.7184);transform-origin:0 0;">1</div>
</body></html>
